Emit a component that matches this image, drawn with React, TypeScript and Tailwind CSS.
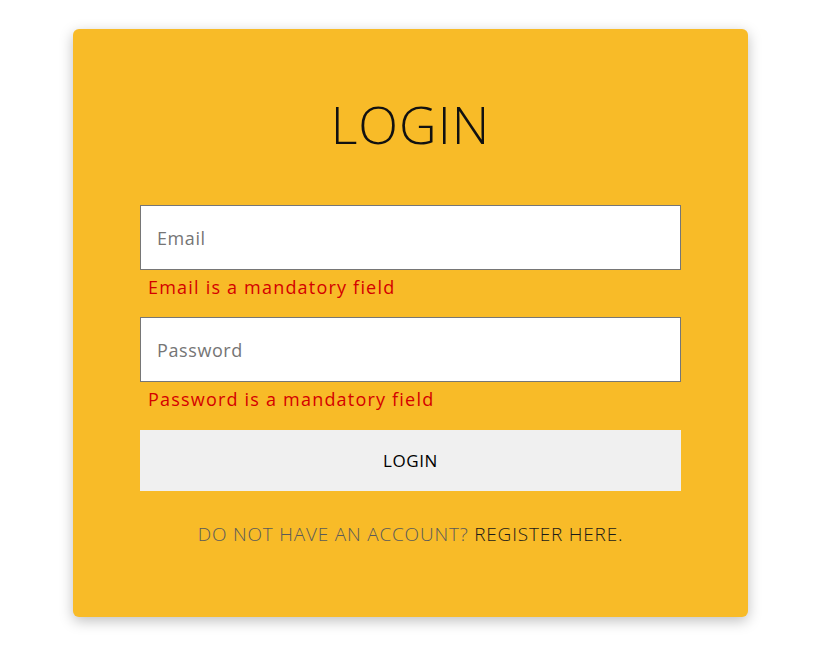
import React from "react";

export default function App() {
  const font = { fontFamily: '"Open Sans", "Liberation Sans", sans-serif' };
  return (
    <div className="min-h-[651px] w-full bg-white" style={font}>
      <div className="pt-[29px] pl-[73px]">
        <div className="w-[675px] h-[588px] rounded-[6px] bg-[#f8bb28] shadow-[0_4px_14px_rgba(0,0,0,0.25)] px-[67px] flex flex-col">
          <h1 className="h-[176px] pt-[62px] text-center text-[52px] leading-[66px] font-light text-[#111] tracking-[1px]">
            LOGIN
          </h1>
          <input
            type="email"
            placeholder="Email"
            className="h-[65px] w-full bg-white border border-[#767676] px-[16px] text-[18px] tracking-[0.6px] text-[#333] placeholder:text-[#757575] outline-none"
          />
          <div className="h-[47px] pt-[4px] pl-[8px] text-[18px] leading-[26px] tracking-[1.2px] text-[#d40000]">
            Email is a mandatory field
          </div>
          <input
            type="password"
            placeholder="Password"
            className="h-[65px] w-full bg-white border border-[#767676] px-[16px] text-[18px] tracking-[0.6px] text-[#333] placeholder:text-[#757575] outline-none"
          />
          <div className="h-[48px] pt-[4px] pl-[8px] text-[18px] leading-[26px] tracking-[1.2px] text-[#d40000]">
            Password is a mandatory field
          </div>
          <button className="h-[61px] w-full bg-[#f0f0f0] text-[17px] tracking-[0.6px] text-black">
            LOGIN
          </button>
          <p className="mt-[29px] text-center text-[19px] leading-[28px] font-light tracking-[0.8px] text-[#5a5a5a]">
            DO NOT HAVE AN ACCOUNT?{" "}
            <span className="text-[#1a1a1a]">REGISTER HERE.</span>
          </p>
        </div>
      </div>
    </div>
  );
}
